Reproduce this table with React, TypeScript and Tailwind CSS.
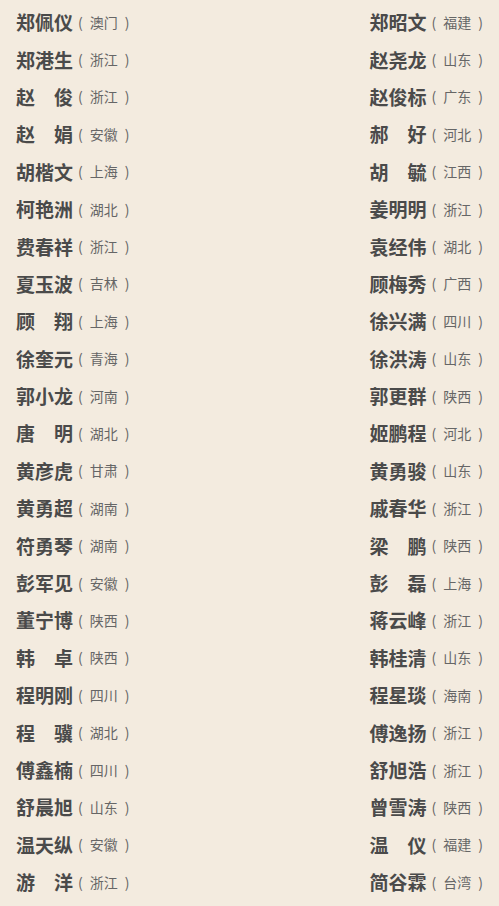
const left: [string, string][] = [
  ['郑佩仪', '澳门'],
  ['郑港生', '浙江'],
  ['赵　俊', '浙江'],
  ['赵　娟', '安徽'],
  ['胡楷文', '上海'],
  ['柯艳洲', '湖北'],
  ['费春祥', '浙江'],
  ['夏玉波', '吉林'],
  ['顾　翔', '上海'],
  ['徐奎元', '青海'],
  ['郭小龙', '河南'],
  ['唐　明', '湖北'],
  ['黄彦虎', '甘肃'],
  ['黄勇超', '湖南'],
  ['符勇琴', '湖南'],
  ['彭军见', '安徽'],
  ['董宁博', '陕西'],
  ['韩　卓', '陕西'],
  ['程明刚', '四川'],
  ['程　骥', '湖北'],
  ['傅鑫楠', '四川'],
  ['舒晨旭', '山东'],
  ['温天纵', '安徽'],
  ['游　洋', '浙江'],
]

const right: [string, string][] = [
  ['郑昭文', '福建'],
  ['赵尧龙', '山东'],
  ['赵俊标', '广东'],
  ['郝　好', '河北'],
  ['胡　毓', '江西'],
  ['姜明明', '浙江'],
  ['袁经伟', '湖北'],
  ['顾梅秀', '广西'],
  ['徐兴满', '四川'],
  ['徐洪涛', '山东'],
  ['郭更群', '陕西'],
  ['姬鹏程', '河北'],
  ['黄勇骏', '山东'],
  ['戚春华', '浙江'],
  ['梁　鹏', '陕西'],
  ['彭　磊', '上海'],
  ['蒋云峰', '浙江'],
  ['韩桂清', '山东'],
  ['程星琰', '海南'],
  ['傅逸扬', '浙江'],
  ['舒旭浩', '浙江'],
  ['曾雪涛', '陕西'],
  ['温　仪', '福建'],
  ['简谷霖', '台湾'],
]

const Person = ({ name, place }: { name: string; place: string }) => (
  <div className="flex items-center whitespace-nowrap">
    <span className="text-[19px] font-bold text-[#4a4a4a] leading-none">{name}</span>
    <span className="ml-[5px] flex items-center text-[14px] text-[#666] leading-none">
      <span>(</span>
      <span className="px-[7px]">{place}</span>
      <span>)</span>
    </span>
  </div>
)

export default function App() {
  return (
    <div
      className="w-[499px] h-[906px] bg-[#f3ebdf] pt-[3px] px-4 overflow-hidden"
      style={{ fontFamily: '"Noto Sans CJK SC", "Noto Sans", sans-serif' }}
    >
      {left.map((l, i) => (
        <div key={i} className="flex h-[37.4px] items-center justify-between">
          <Person name={l[0]} place={l[1]} />
          <Person name={right[i][0]} place={right[i][1]} />
        </div>
      ))}
    </div>
  )
}
